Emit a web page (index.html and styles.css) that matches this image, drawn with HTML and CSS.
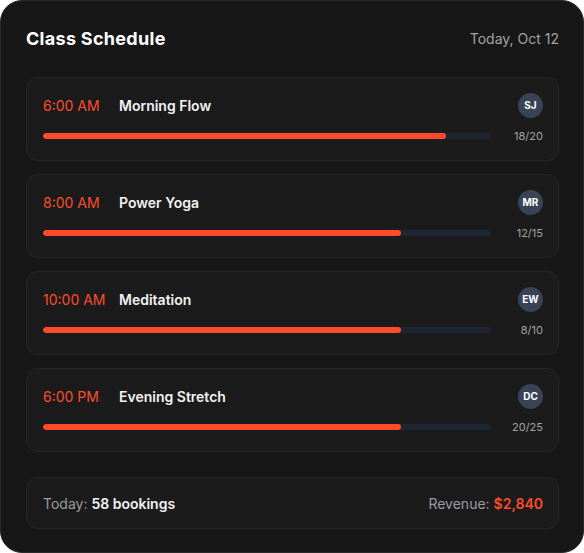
FILE: index.html
```html
<!DOCTYPE html>
<html>
<head>
<meta charset="utf-8">
<link rel="stylesheet" href="styles.css">
</head>
<body>
<div class="card">
  <header class="head">
    <h1 class="title">Class Schedule</h1>
    <span class="date">Today, Oct 12</span>
  </header>
  <div class="list">
    <div class="row">
      <div class="line"><span class="time">6:00 AM</span><span class="name">Morning Flow</span></div>
      <div class="avatar">SJ</div>
      <div class="track"><div class="fill" style="width:90%"></div></div>
      <div class="count">18/20</div>
    </div>
    <div class="row">
      <div class="line"><span class="time">8:00 AM</span><span class="name">Power Yoga</span></div>
      <div class="avatar">MR</div>
      <div class="track"><div class="fill" style="width:80%"></div></div>
      <div class="count">12/15</div>
    </div>
    <div class="row">
      <div class="line"><span class="time">10:00 AM</span><span class="name">Meditation</span></div>
      <div class="avatar">EW</div>
      <div class="track"><div class="fill" style="width:80%"></div></div>
      <div class="count">8/10</div>
    </div>
    <div class="row">
      <div class="line"><span class="time">6:00 PM</span><span class="name">Evening Stretch</span></div>
      <div class="avatar">DC</div>
      <div class="track"><div class="fill" style="width:80%"></div></div>
      <div class="count">20/25</div>
    </div>
  </div>
  <footer class="foot">
    <span class="label">Today: <b class="strong">58 bookings</b></span>
    <span class="label">Revenue: <b class="accent">$2,840</b></span>
  </footer>
</div>
</body>
</html>
```
FILE: styles.css
```css
* { box-sizing: border-box; }
html, body { margin: 0; padding: 0; background: #ffffff; }
body { font-family: "Inter", "Liberation Sans", sans-serif; }
.card {
  width: 584px;
  height: 553px;
  background: #171717;
  border: 1px solid #2a2a2a;
  border-radius: 22px;
  padding: 25px 24px 23px 25px;
  display: flex;
  flex-direction: column;
}
.head {
  display: flex;
  justify-content: space-between;
  align-items: center;
  height: 24px;
  margin-bottom: 27px;
}
.title {
  margin: 0;
  font-size: 18px;
  font-weight: 700;
  color: #ffffff;
  letter-spacing: 0.3px;
}
.date { font-size: 14px; color: #a3a3a3; }
.list { display: flex; flex-direction: column; gap: 13px; }
.row {
  height: 84px;
  background: #1b1b1b;
  border: 1px solid #272727;
  border-radius: 12px;
  padding: 15px 15px 16px 16px;
  display: grid;
  grid-template-columns: 1fr 40px;
  grid-template-rows: 24px 16px;
  column-gap: 12px;
  row-gap: 11px;
  align-items: center;
}
.line { display: flex; align-items: center; }
.time { width: 76px; font-size: 14px; color: #ff4b2b; }
.name { font-size: 14px; font-weight: 600; color: #f2f2f2; }
.avatar {
  justify-self: end;
  width: 25px; height: 25px;
  border-radius: 50%;
  background: #3a4356;
  color: #ffffff;
  font-size: 10px;
  font-weight: 700;
  display: flex; align-items: center; justify-content: center;
}
.track {
  height: 6px;
  border-radius: 3px;
  background: #1e2532;
  overflow: hidden;
}
.fill { height: 100%; background: #ff4b2b; border-radius: 3px; }
.count { justify-self: end; font-size: 11px; color: #a3a3a3; }
.foot {
  margin-top: 25px;
  height: 52px;
  background: #1b1b1b;
  border: 1px solid #272727;
  border-radius: 12px;
  padding: 0 15px 0 16px;
  display: flex;
  justify-content: space-between;
  align-items: center;
}
.label { font-size: 14px; color: #9a9ca3; }
.strong { font-weight: 600; color: #f2f2f2; }
.accent { font-weight: 600; color: #ff4b2b; }
```
